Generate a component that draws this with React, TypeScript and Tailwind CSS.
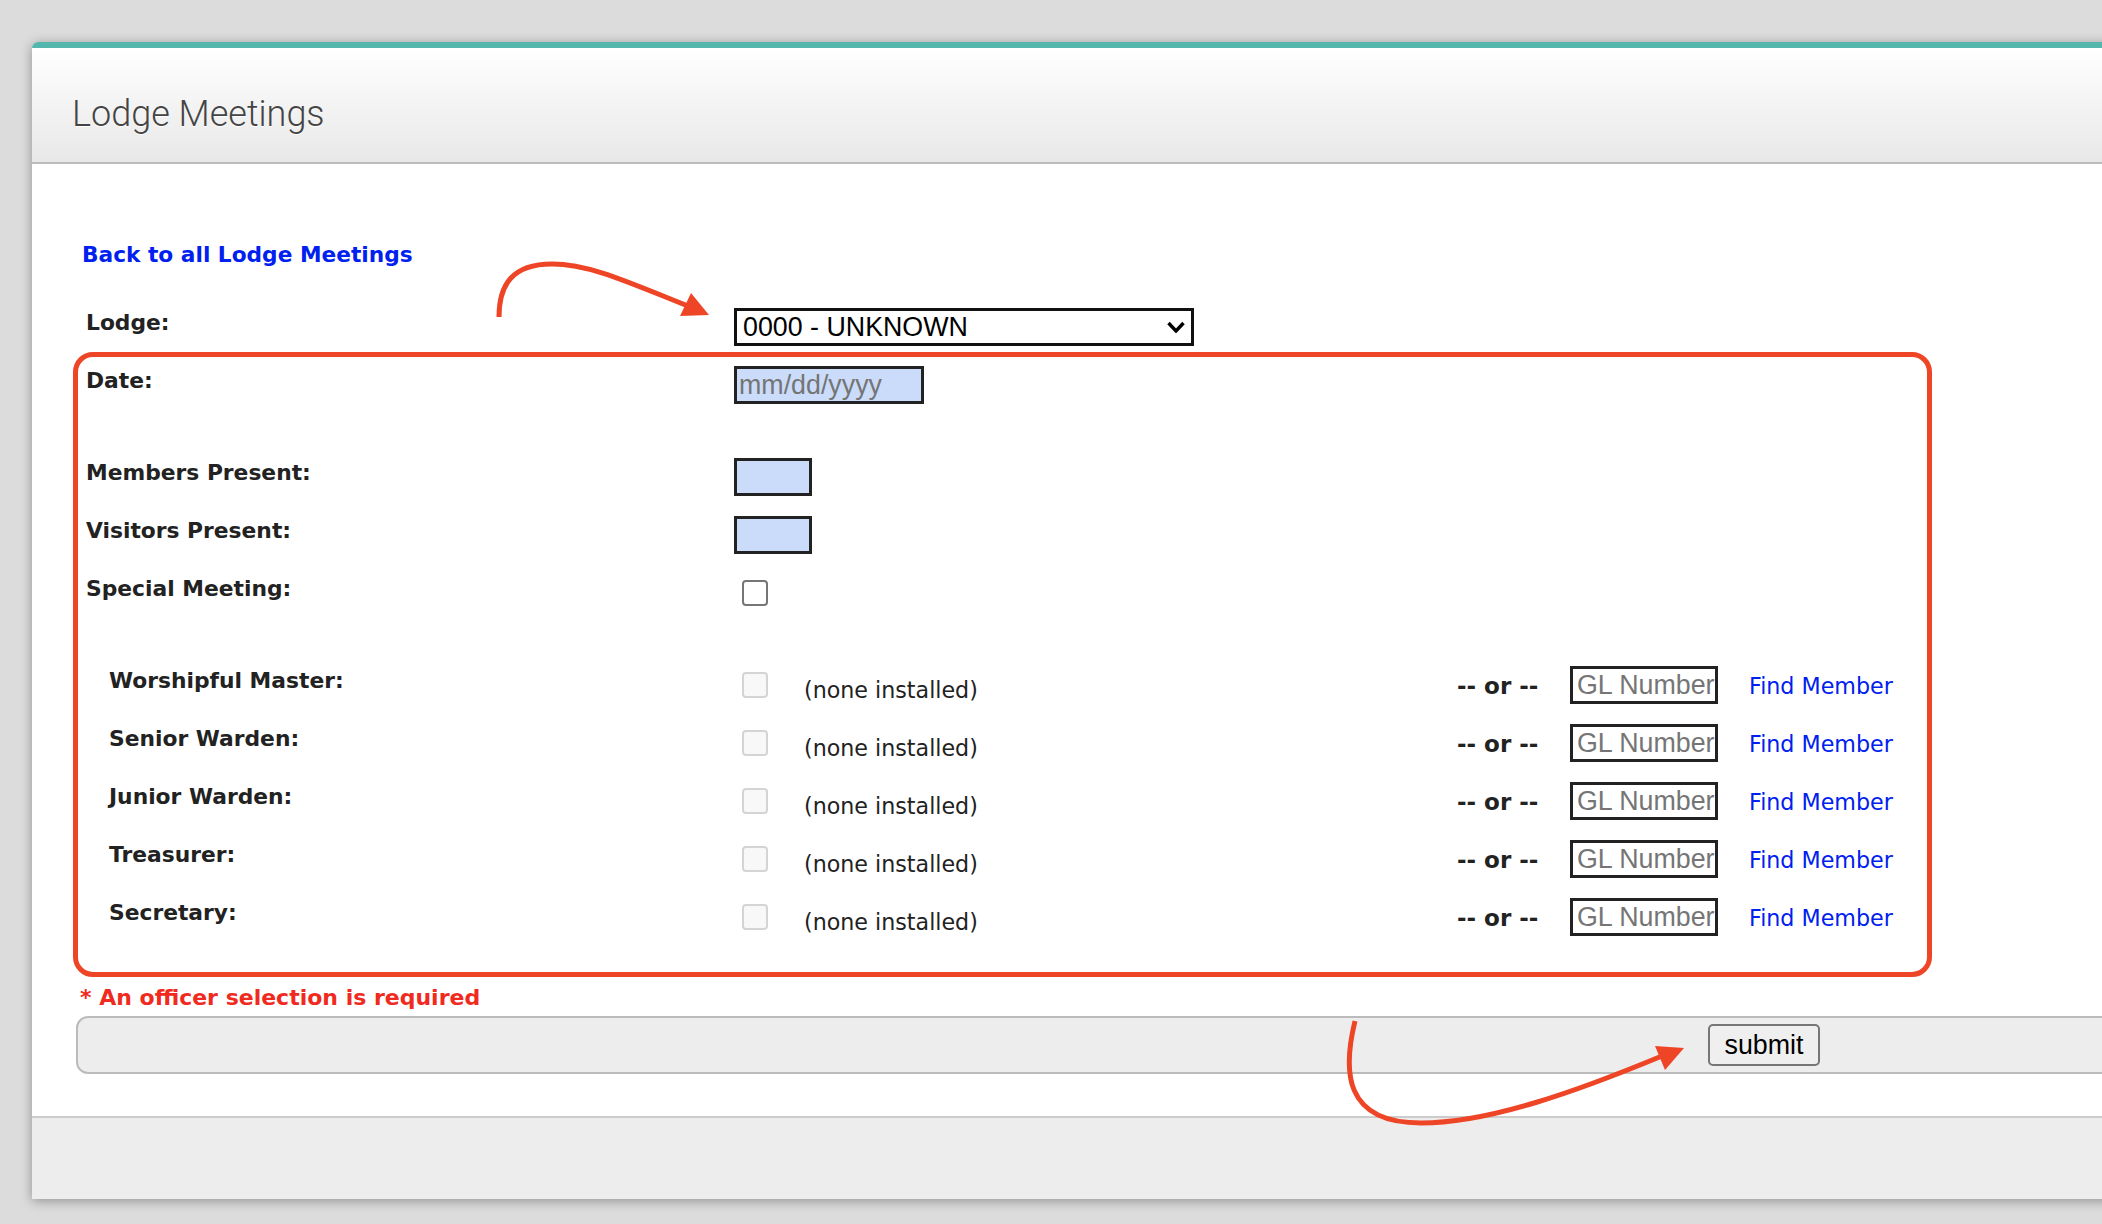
import React from "react";

const officers = ["Worshipful Master:", "Senior Warden:", "Junior Warden:", "Treasurer:", "Secretary:"];

function Annotations() {
  return (
    <>
      <div className="pointer-events-none absolute left-[73px] top-[352px] h-[625px] w-[1859px] rounded-[20px] border-[5px] border-[#ef4527]" />
      <svg className="pointer-events-none absolute left-0 top-0" width="2102" height="1224" viewBox="0 0 2102 1224" fill="none">
        <path d="M499 317 C 499 285, 512 264, 552 264 C 590 264, 630 283, 688 306" stroke="#ef4527" strokeWidth="5" />
        <path d="M709 315 L691 293 L680 316 Z" fill="#ef4527" />
        <path d="M1355 1021 C 1343 1070, 1343 1123, 1421 1123 C 1490 1123, 1580 1090, 1662 1056" stroke="#ef4527" strokeWidth="5" />
        <path d="M1684 1048 L1655 1046 L1665 1070 Z" fill="#ef4527" />
      </svg>
    </>
  );
}

function Label({ children, indent }: { children: React.ReactNode; indent?: boolean }) {
  return (
    <div className={`w-[647px] shrink-0 pt-[1px] text-[21.8px] font-bold leading-[28px] text-[#222] [font-family:'DejaVu_Sans',sans-serif] ${indent ? "pl-[23px]" : ""}`}>
      {children}
    </div>
  );
}

const field =
  "h-[38px] border-[3px] border-[#222] text-[26.8px] outline-none [font-family:'Liberation_Sans',sans-serif] placeholder:text-[#757575]";

export default function App() {
  return (
    <div className="relative h-[1224px] w-[2102px] overflow-hidden bg-[#dcdcdc] pl-[32px] pt-[42px]">
      <div className="flex w-[2300px] flex-col rounded-t-[6px] bg-white shadow-[0_2px_12px_rgba(0,0,0,0.35)]">
        <div className="flex h-[122px] items-center rounded-t-[6px] border-b-[2px] border-t-[6px] border-b-[#bbbbbb] border-t-[#55b6ae] bg-gradient-to-b from-white to-[#e8e8e8] pl-[40px] pt-[18px]">
          <h1 className="text-[36px] font-light text-[#444] [font-family:Roboto,sans-serif] [text-shadow:0_1px_1px_#fff]">Lodge Meetings</h1>
        </div>

        <div className="flex flex-col pl-[44px] pt-[76px]">
          <a href="#" className="ml-[6px] pt-[1px] text-[21.7px] font-bold leading-[28px] text-[#0020f0] [font-family:'DejaVu_Sans',sans-serif]">
            Back to all Lodge Meetings
          </a>

          <div className="-ml-[1px] flex flex-col pl-[11px] pt-[39px]">
            <div className="flex h-[58px]">
              <Label>Lodge:</Label>
              <div className="relative ml-[1px] h-[38px] w-[460px]">
                <select className="h-[38px] w-[460px] appearance-none border-[3px] border-[#111] bg-white pl-[6px] text-[26.8px] leading-[30px] text-black outline-none [font-family:'Liberation_Sans',sans-serif]">
                  <option>0000 - UNKNOWN</option>
                </select>
                <svg className="pointer-events-none absolute right-[9px] top-[13px]" width="18" height="12" viewBox="0 0 18 12" fill="none">
                  <path d="M1.5 2 L9 10 L16.5 2" stroke="#000" strokeWidth="3.4" />
                </svg>
              </div>
            </div>

            <div className="flex h-[58px]">
              <Label>Date:</Label>
              <input placeholder="mm/dd/yyyy" className={`${field} ml-[1px] w-[190px] bg-[#cbdcfb] pl-[2px]`} />
            </div>

            <div className="mt-[34px] flex h-[58px]">
              <Label>Members Present:</Label>
              <input className={`${field} ml-[1px] w-[78px] bg-[#cbdcfb]`} />
            </div>

            <div className="flex h-[58px]">
              <Label>Visitors Present:</Label>
              <input className={`${field} ml-[1px] w-[78px] bg-[#cbdcfb]`} />
            </div>

            <div className="flex h-[58px]">
              <Label>Special Meeting:</Label>
              <input type="checkbox" className="ml-[9px] mt-[6px] h-[26px] w-[26px] appearance-none rounded-[4px] border-[2.5px] border-[#767676] bg-white" />
            </div>

            <div className="mt-[34px] flex flex-col">
              {officers.map((name) => (
                <div key={name} className="flex h-[58px]">
                  <Label indent>{name}</Label>
                  <input type="checkbox" disabled className="ml-[9px] mt-[6px] h-[26px] w-[26px] shrink-0 appearance-none rounded-[4px] border-[2.5px] border-[#d4d4d4] bg-[#f8f8f8]" />
                  <span className="ml-[36px] mt-[10px] w-[653px] shrink-0 text-[22.2px] leading-[28px] text-[#222] [font-family:'DejaVu_Sans',sans-serif]">(none installed)</span>
                  <span className="mt-[6px] w-[113px] shrink-0 text-[23px] font-bold leading-[28px] text-[#222] [font-family:'DejaVu_Sans',sans-serif]">-- or --</span>
                  <input placeholder="GL Number" className={`${field} w-[148px] bg-white pl-[4px]`} />
                  <a href="#" className="ml-[31px] mt-[6px] text-[22.2px] leading-[28px] text-[#0020f0] [font-family:'DejaVu_Sans',sans-serif]">Find Member</a>
                </div>
              ))}
            </div>
          </div>

          <p className="ml-[4px] mt-[28px] text-[22px] font-bold leading-[28px] text-[#f02a1e] [font-family:'DejaVu_Sans',sans-serif]">* An officer selection is required</p>

          <div className="mt-[4px] flex h-[58px] w-[2200px] rounded-[12px] border-[2.5px] border-[#bbbbbb] bg-[#ededed] pl-[1630px] pt-[6px]">
            <button className="h-[42px] w-[112px] rounded-[5px] border-[2.5px] border-[#767676] bg-[#efefef] text-[26.8px] leading-none text-black [font-family:'Liberation_Sans',sans-serif]">submit</button>
          </div>
        </div>

        <div className="mt-[42px] h-[83px] border-t-[2.5px] border-t-[#cccccc] bg-[#ededed]" />
      </div>
      <Annotations />
    </div>
  );
}
